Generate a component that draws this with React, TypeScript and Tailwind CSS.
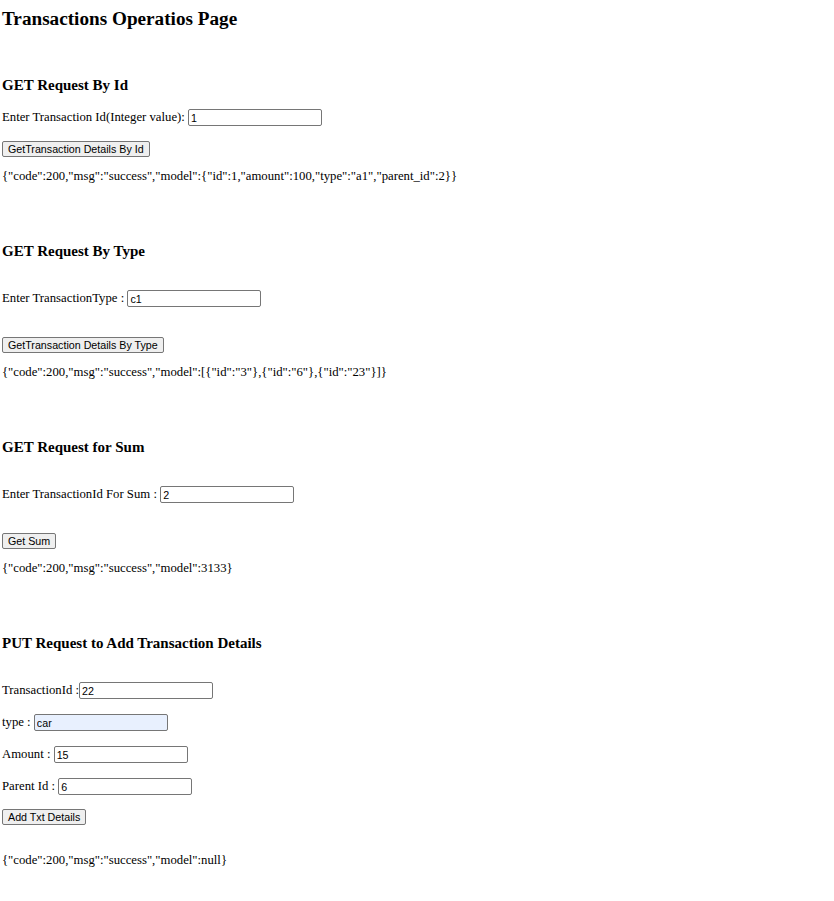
import React from "react";

function Campo({ value, autofill }: { value: string; autofill?: boolean }) {
  return (
    <input
      readOnly
      value={value}
      className={
        autofill
          ? "box-border h-[17px] w-[134px] rounded-[2px] border border-[#767676] bg-[#e8f0fe] px-[2px] font-['Liberation_Sans',Arial,sans-serif] text-[10.7px] text-black outline-none"
          : "box-border h-[17px] w-[134px] rounded-[2px] border border-[#767676] bg-white px-[2px] font-['Liberation_Sans',Arial,sans-serif] text-[10.7px] text-black outline-none"
      }
    />
  );
}

function Boton({ children, className }: { children: React.ReactNode; className?: string }) {
  return (
    <div className={className}>
      <button className="box-border h-[16px] rounded-[2px] border border-[#767676] bg-[#efefef] px-[5px] font-['Liberation_Sans',Arial,sans-serif] text-[10.7px] leading-[12px] text-black">
        {children}
      </button>
    </div>
  );
}

function Fila({ label, value, autofill, className }: { label: string; value: string; autofill?: boolean; className: string }) {
  return (
    <div className={className}>
      <span className="whitespace-pre leading-[15px]">{label}</span>
      <Campo value={value} autofill={autofill} />
    </div>
  );
}

export default function App() {
  return (
    <div className="min-h-[901px] bg-white px-[2px] font-['Liberation_Serif','Times_New_Roman',serif] text-[12.74px] text-black">
      <h1 className="pt-[8px] text-[19.2px] font-bold leading-[22px]">Transactions Operatios Page</h1>

      {/* por id */}
      <h3 className="mt-[47px] h-[17px] text-[15px] font-bold leading-[17px]">GET Request By Id</h3>
      <Fila className="mt-[15px] flex h-[17px] items-center" label="Enter Transaction Id(Integer value): " value="1" />
      <Boton className="mt-[15px] flex h-[16px]">GetTransaction Details By Id</Boton>
      <p className="mt-[12px] leading-[15px]">
        {'{"code":200,"msg":"success","model":{"id":1,"amount":100,"type":"a1","parent_id":2}}'}
      </p>

      {/* por tipo */}
      <h3 className="mt-[59px] h-[17px] text-[15px] font-bold leading-[17px]">GET Request By Type</h3>
      <Fila className="mt-[30px] flex h-[17px] items-center" label="Enter TransactionType : " value="c1" />
      <Boton className="mt-[30px] flex h-[16px]">GetTransaction Details By Type</Boton>
      <p className="mt-[12px] leading-[15px]">
        {'{"code":200,"msg":"success","model":[{"id":"3"},{"id":"6"},{"id":"23"}]}'}
      </p>

      {/* suma */}
      <h3 className="mt-[59px] h-[17px] text-[15px] font-bold leading-[17px]">GET Request for Sum</h3>
      <Fila className="mt-[30px] flex h-[17px] items-center" label="Enter TransactionId For Sum : " value="2" />
      <Boton className="mt-[30px] flex h-[16px]">Get Sum</Boton>
      <p className="mt-[12px] leading-[15px]">{'{"code":200,"msg":"success","model":3133}'}</p>

      {/* put */}
      <h3 className="mt-[59px] h-[17px] text-[15px] font-bold leading-[17px]">PUT Request to Add Transaction Details</h3>
      <Fila className="mt-[30px] flex h-[17px] items-center" label="TransactionId :" value="22" />
      <Fila className="mt-[15px] flex h-[17px] items-center" label="type : " value="car" autofill />
      <Fila className="mt-[15px] flex h-[17px] items-center" label="Amount : " value="15" />
      <Fila className="mt-[15px] flex h-[17px] items-center" label="Parent Id : " value="6" />
      <Boton className="mt-[14px] flex h-[16px]">Add Txt Details</Boton>
      <p className="mt-[28px] leading-[15px]">{'{"code":200,"msg":"success","model":null}'}</p>
    </div>
  );
}
